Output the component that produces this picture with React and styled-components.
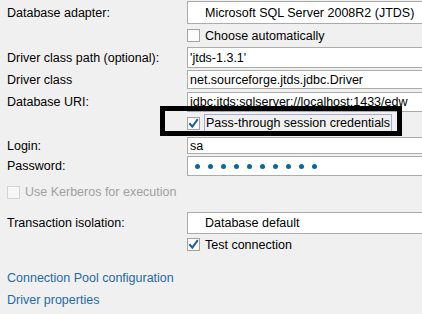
import React from 'react';
import styled, { createGlobalStyle } from 'styled-components';

const GlobalStyle = createGlobalStyle`
    html, body {
        margin: 0;
        padding: 0;
        background: #f0f0f0;
        overflow: hidden;
    }
    body {
        font-family: "Liberation Sans", Arial, sans-serif;
        font-size: 12.5px;
        color: #000;
    }
`;

const Check = ({ checked, disabled }) => (
    <Box disabled={disabled}>
        {checked && (
            <svg width="11" height="11" viewBox="0 0 11 11">
                <path d="M2 6 L4.3 8.6 L9.2 2" fill="none" stroke="#1d5f9e" strokeWidth="2" strokeLinecap="square" />
            </svg>
        )}
    </Box>
);

const App = () => {
    return (
        <>
            <GlobalStyle />
            <Page>
                <Row top={1} h={23}>
                    <Label>Database adapter:</Label>
                    <Combo>Microsoft SQL Server 2008R2 (JTDS)</Combo>
                </Row>
                <Row top={0} h={23}>
                    <span />
                    <CheckLine>
                        <Check />
                        <span>Choose automatically</span>
                    </CheckLine>
                </Row>
                <Row top={0} h={21}>
                    <Label>Driver class path (optional):</Label>
                    <Field>'jtds-1.3.1'</Field>
                </Row>
                <Row top={2} h={19}>
                    <Label>Driver class</Label>
                    <Field>net.sourceforge.jtds.jdbc.Driver</Field>
                </Row>
                <Row top={3} h={20}>
                    <Label>Database URI:</Label>
                    <Field>jdbc:jtds:sqlserver://localhost:1433/edw</Field>
                </Row>
                <Row top={0} h={22}>
                    <span />
                    <CheckLine>
                        <Check checked />
                        <Focused>Pass-through session credentials</Focused>
                    </CheckLine>
                </Row>
                <Row top={3} h={17}>
                    <Label>Login:</Label>
                    <Field>sa</Field>
                </Row>
                <Row top={2} h={20}>
                    <Label>Password:</Label>
                    <Field>
                        <Dots>
                            {Array.from({ length: 10 }).map((_, i) => <Dot key={i} />)}
                        </Dots>
                    </Field>
                </Row>
                <Row top={0} h={32}>
                    <CheckLine disabled>
                        <Check disabled />
                        <span>Use Kerberos for execution</span>
                    </CheckLine>
                </Row>
                <Row top={4} h={22}>
                    <Label>Transaction isolation:</Label>
                    <Combo>Database default</Combo>
                </Row>
                <Row top={0} h={21}>
                    <span />
                    <CheckLine>
                        <Check checked />
                        <span>Test connection</span>
                    </CheckLine>
                </Row>
                <Links>
                    <Link>Connection Pool configuration</Link>
                    <Link>Driver properties</Link>
                </Links>
                <Highlight />
            </Page>
        </>
    );
};

export default App;

const Page = styled.div`
    position: relative;
    width: 422px;
    height: 314px;
    padding-left: 7px;
    box-sizing: border-box;
`;

const Row = styled.div`
    display: grid;
    grid-template-columns: 180px 250px;
    align-items: center;
    height: ${props => props.h}px;
    margin-top: ${props => props.top}px;
    white-space: nowrap;
`;

const Label = styled.div`
    line-height: 14px;
`;

const Field = styled.div`
    display: flex;
    align-items: center;
    height: 100%;
    box-sizing: border-box;
    background: #fff;
    border: 1px solid #ababab;
    padding-left: 2px;
    overflow: hidden;
    white-space: nowrap;
`;

const Combo = styled(Field)`
    padding-left: 17px;
`;

const CheckLine = styled.label`
    display: flex;
    align-items: center;
    gap: 5px;
    color: ${props => props.disabled ? '#a0a0a0' : '#000'};
    grid-column: ${props => props.disabled ? '1 / 3' : 'auto'};
`;

const Box = styled.span`
    display: flex;
    align-items: center;
    justify-content: center;
    width: 13px;
    height: 13px;
    box-sizing: border-box;
    border: 1px solid ${props => props.disabled ? '#d4d4d4' : '#a4a4a4'};
    background: ${props => props.disabled ? '#f6f6f6' : '#fdfdfd'};
`;

const Focused = styled.span`
    margin-left: -1px;
    padding: 1px 1px 1px 1px;
    border: 1px solid #a9a9dc;
    line-height: 14px;
`;

const Dots = styled.div`
    display: flex;
    gap: 8px;
    padding-left: 5px;
`;

const Dot = styled.span`
    width: 5px;
    height: 5px;
    border-radius: 50%;
    background: #0d679c;
`;

const Links = styled.div`
    display: flex;
    flex-direction: column;
    gap: 8px;
    margin-top: 16px;
`;

const Link = styled.a`
    color: #1f6aa6;
    line-height: 14px;
    cursor: pointer;
`;

const Highlight = styled.div`
    position: absolute;
    left: 160px;
    top: 105px;
    width: 242px;
    height: 30px;
    box-sizing: border-box;
    border: 5px solid #000;
    pointer-events: none;
`;
